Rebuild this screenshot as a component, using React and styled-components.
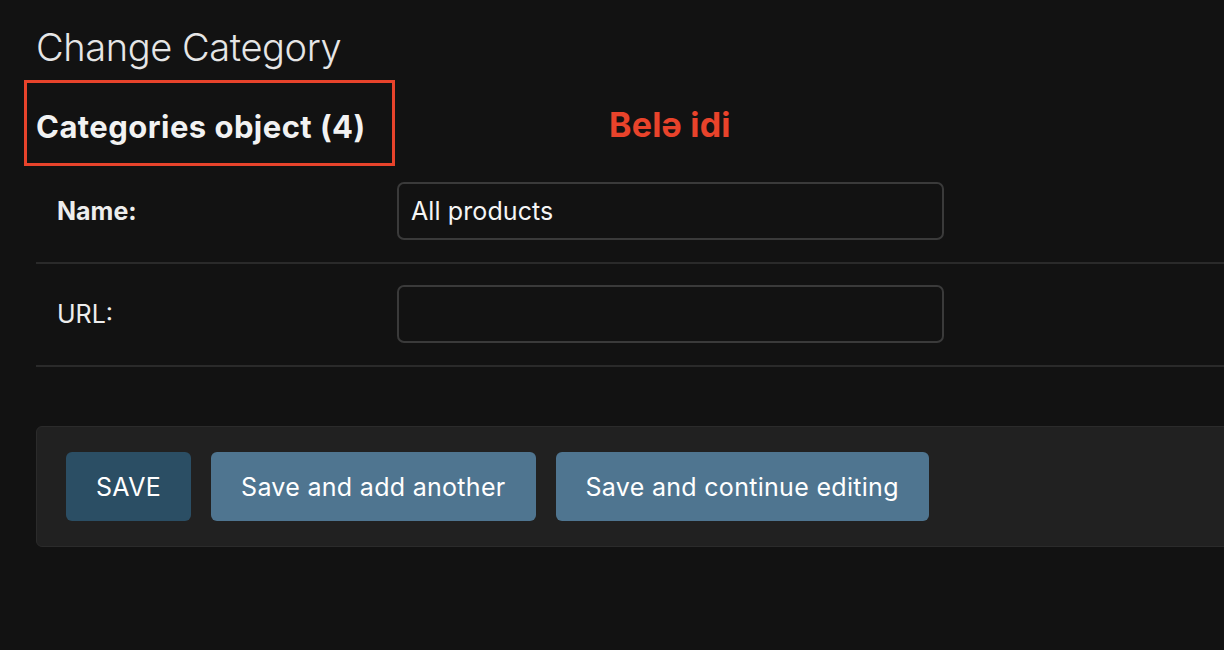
import styled, { createGlobalStyle } from 'styled-components';

const GlobalStyle = createGlobalStyle`
  html, body {
    margin: 0;
    padding: 0;
    background: #121212;
    overflow: hidden;
  }
  body {
    font-family: Inter, "Noto Sans", "Liberation Sans", sans-serif;
    color: #f5f5f5;
  }
`;

const Page = styled.div`
  width: 1400px;
  padding: 24px 0 0 36px;
`;

const Title = styled.h1`
  margin: 0;
  font-size: 38px;
  font-weight: 300;
  line-height: 46px;
  color: #e6e6e6;
  letter-spacing: -0.4px;
`;

const HeadRow = styled.div`
  display: flex;
  align-items: center;
  margin-top: 10px;
`;

const Boxed = styled.div`
  margin-left: -12px;
  width: 371px;
  height: 86px;
  box-sizing: border-box;
  border: 3px solid #e8432b;
  display: flex;
  align-items: center;
  padding: 6px 0 0 9px;
`;

const SubTitle = styled.h2`
  margin: 0;
  font-size: 31px;
  font-weight: 700;
  color: #f2f2f2;
  letter-spacing: 0.45px;
`;

const Note = styled.span`
  margin-left: 214px;
  margin-top: 2px;
  font-size: 34px;
  font-weight: 700;
  color: #e8432b;
  letter-spacing: 0.2px;
`;

const Fieldset = styled.div`
  margin-top: -5px;
`;

const Row = styled.div`
  display: flex;
  align-items: center;
  padding: 21px 0 22px 21px;
  border-bottom: 2px solid #2a2a2a;
`;

const Label = styled.label`
  width: 340px;
  font-size: 25px;
  font-weight: ${(p) => (p.$required ? 700 : 400)};
  color: #ededed;
`;

const Input = styled.div`
  width: 547px;
  height: 58px;
  box-sizing: border-box;
  border: 2px solid #3a3a3a;
  border-radius: 7px;
  display: flex;
  align-items: center;
  padding-left: 12px;
  font-size: 25px;
  color: #f5f5f5;
  letter-spacing: 0.1px;
`;

const Submit = styled.div`
  margin-top: 59px;
  display: flex;
  gap: 20px;
  padding: 25px 29px;
  background: #212121;
  border: 1px solid #2b2b2b;
  border-radius: 6px;
`;

const Button = styled.div`
  height: 69px;
  display: flex;
  align-items: center;
  padding: 0 30px;
  border-radius: 6px;
  font-size: 25px;
  color: #ffffff;
  background: ${(p) => (p.$primary ? '#2b4e64' : '#4f7590')};
  letter-spacing: 0.3px;
`;

export default function App() {
  return (
    <>
      <GlobalStyle />
      <Page>
        <Title>Change Category</Title>
        <HeadRow>
          <Boxed>
            <SubTitle>Categories object (4)</SubTitle>
          </Boxed>
          <Note>Belə idi</Note>
        </HeadRow>
        <Fieldset>
          <Row>
            <Label $required>Name:</Label>
            <Input>All products</Input>
          </Row>
          <Row>
            <Label>URL:</Label>
            <Input />
          </Row>
        </Fieldset>
        <Submit>
          <Button $primary>SAVE</Button>
          <Button>Save and add another</Button>
          <Button>Save and continue editing</Button>
        </Submit>
      </Page>
    </>
  );
}
